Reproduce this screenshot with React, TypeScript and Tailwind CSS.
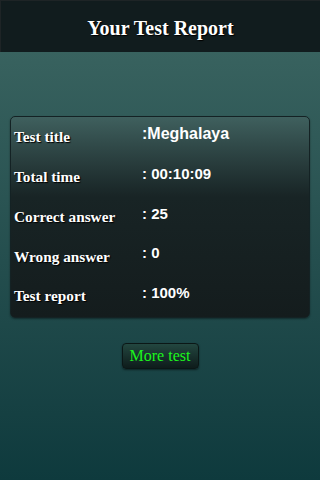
import React from 'react';

const rows = [
  { label: 'Test title', value: ':Meghalaya', big: true },
  { label: 'Total time', value: ': 00:10:09' },
  { label: 'Correct answer', value: ': 25' },
  { label: 'Wrong answer', value: ': 0' },
  { label: 'Test report', value: ': 100%' },
];

export default function App() {
  return (
    <div className="w-[320px] h-[480px] flex flex-col bg-gradient-to-b from-[#3d6763] to-[#0e3a3d] overflow-hidden">
      {/* header */}
      <div className="h-[52px] shrink-0 bg-[#111c1e] border-t border-l border-[#1e2426] flex items-center justify-center">
        <h1 className="text-[20px] font-bold text-white font-['Liberation_Serif',serif] [text-shadow:1px_1px_1px_#000] mt-[2px]">
          Your Test Report
        </h1>
      </div>

      <div className="px-[10px] pt-[64px]">
        <div className="rounded-[5px] border border-[#142224] bg-gradient-to-b from-[#3f605e] via-[#182425] via-40% to-[#141c1d] pb-[1px] shadow-[0_1px_2px_rgba(0,0,0,0.4)]">
          {rows.map((r) => (
            <div key={r.label} className="h-[39.75px] flex items-center pl-[3px]">
              <div className="w-[128px] pt-[2px] text-[15.3px] font-bold text-white font-['Liberation_Serif',serif] [text-shadow:1px_1px_1px_#000]">
                {r.label}
              </div>
              <div className={`${r.big ? 'text-[16px]' : 'text-[15px]'} font-bold text-white font-['Liberation_Sans',sans-serif] -mt-[5px]`}>
                {r.value}
              </div>
            </div>
          ))}
        </div>
      </div>

      <div className="flex justify-center pt-[25px]">
        <button className="w-[77px] h-[26px] rounded-[4px] border border-[#0b1716] bg-gradient-to-b from-[#234740] to-[#0e1c1b] text-[#1cf51c] text-[16px] font-['Liberation_Serif',serif] leading-none shadow-[0_1px_2px_rgba(0,0,0,0.5)]">
          More test
        </button>
      </div>
    </div>
  );
}
